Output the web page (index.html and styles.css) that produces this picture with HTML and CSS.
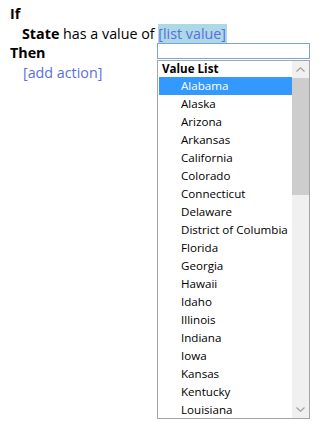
FILE: index.html
```html
<!DOCTYPE html>
<html>
<head>
<meta charset="utf-8">
<link rel="stylesheet" href="styles.css">
</head>
<body>
<div class="rule">
  <div class="line kw">If</div>
  <div class="line cond"><b>State</b> has a value of <span class="link sel">[list value]</span></div>
  <div class="line kw">Then</div>
  <div class="line act"><span class="link">[add action]</span></div>
</div>
<div class="dropdown">
  <div class="search"></div>
  <div class="listbox">
    <div class="items">
      <div class="head">Value List</div>
      <div class="item active">Alabama</div>
      <div class="item">Alaska</div>
      <div class="item">Arizona</div>
      <div class="item">Arkansas</div>
      <div class="item">California</div>
      <div class="item">Colorado</div>
      <div class="item">Connecticut</div>
      <div class="item">Delaware</div>
      <div class="item">District of Columbia</div>
      <div class="item">Florida</div>
      <div class="item">Georgia</div>
      <div class="item">Hawaii</div>
      <div class="item">Idaho</div>
      <div class="item">Illinois</div>
      <div class="item">Indiana</div>
      <div class="item">Iowa</div>
      <div class="item">Kansas</div>
      <div class="item">Kentucky</div>
      <div class="item">Louisiana</div>
    </div>
    <div class="scrollbar">
      <div class="btn"><svg width="9" height="5" viewBox="0 0 9 5"><path d="M0.5 4.5 L4.5 0.8 L8.5 4.5" fill="none" stroke="#a3a3a3" stroke-width="1.3"/></svg></div>
      <div class="thumb"></div>
      <div class="track"></div>
      <div class="btn"><svg width="9" height="5" viewBox="0 0 9 5"><path d="M0.5 0.5 L4.5 4.2 L8.5 0.5" fill="none" stroke="#a3a3a3" stroke-width="1.3"/></svg></div>
    </div>
  </div>
</div>
</body>
</html>
```

FILE: styles.css
```css
html, body {
  margin: 0;
  padding: 0;
  background: #ffffff;
}
body {
  font-family: "Open Sans", "Noto Sans", sans-serif;
  color: #000;
  position: relative;
  width: 324px;
  height: 429px;
  overflow: hidden;
}
.rule {
  padding: 4px 0 0 10px;
  font-size: 14.3px;
}
.line {
  height: 19.5px;
  line-height: 19.5px;
  white-space: nowrap;
}
.kw {
  font-weight: 700;
}
.cond {
  padding-left: 12px;
}
.cond b {
  font-weight: 700;
}
.act {
  padding-left: 13px;
}
.link {
  color: #5a6ee2;
}
.sel {
  background: #add8e6;
  display: inline-block;
  height: 19px;
  line-height: 19px;
  padding-right: 1px;
}
.dropdown {
  position: absolute;
  left: 157px;
  top: 43px;
  width: 153px;
}
.search {
  height: 14px;
  border: 1px solid #7aa3dc;
  background: #fff;
}
.listbox {
  margin-top: 1px;
  height: 357px;
  border: 1px solid #a5a5a5;
  display: flex;
  overflow: hidden;
  font-size: 11.6px;
}
.items {
  flex: 1;
  padding-left: 1px;
  overflow: hidden;
}
.head {
  height: 16px;
  line-height: 16px;
  font-weight: 700;
  padding-left: 3px;
}
.item {
  height: 18px;
  line-height: 18px;
  padding-left: 22px;
  white-space: nowrap;
}
.item.active {
  background: #3399ff;
  color: #fff;
}
.scrollbar {
  width: 17px;
  background: #f0f0f0;
  display: flex;
  flex-direction: column;
}
.btn {
  height: 17px;
  display: flex;
  align-items: center;
  justify-content: center;
}
.thumb {
  height: 117px;
  background: #cdcdcd;
}
.track {
  flex: 1;
}
```
